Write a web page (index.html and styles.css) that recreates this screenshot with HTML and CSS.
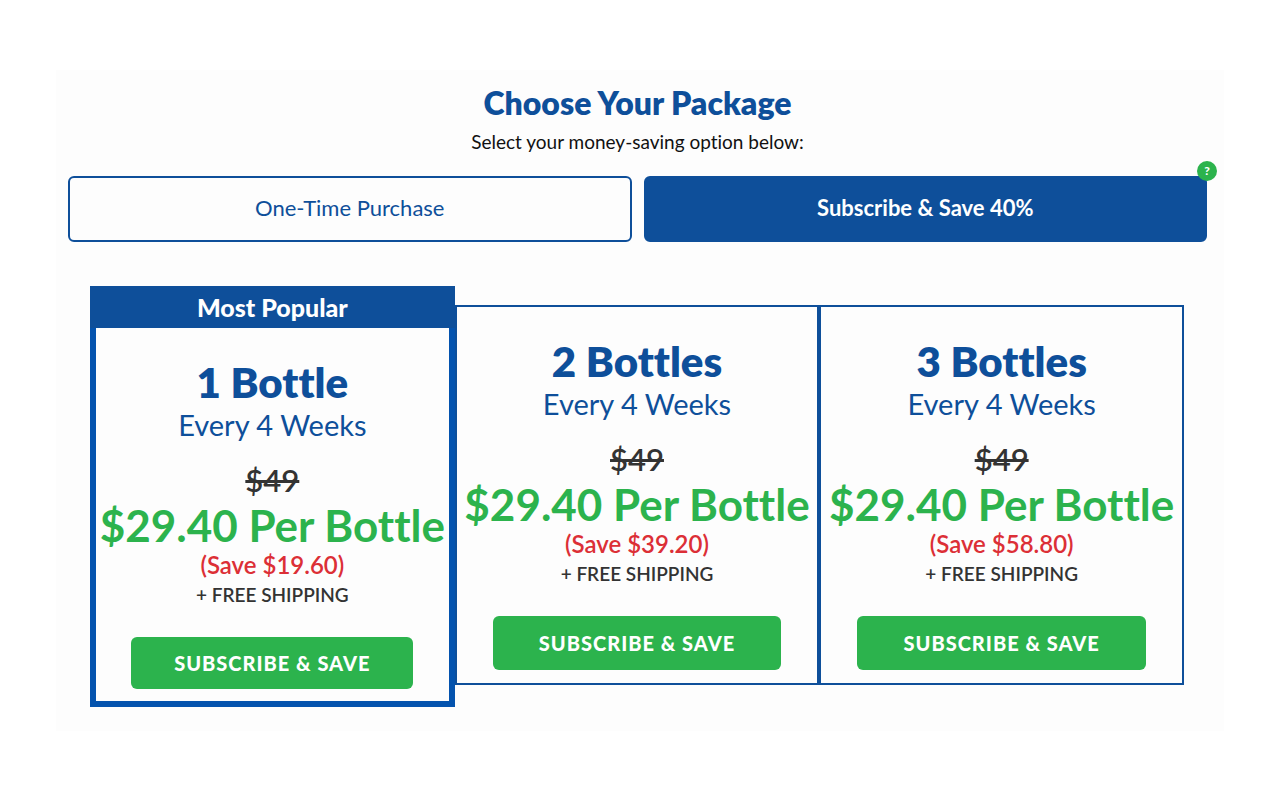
FILE: index.html
```
<!DOCTYPE html>
<html lang="en">
<head>
    <meta charset="UTF-8">
    <meta name="viewport" content="width=device-width, initial-scale=1.0">
    <title>Choose Your Package</title>
    <link rel="stylesheet" href="styles.css">
</head>
<body>
    <main class="package">
        <h1>Choose Your Package</h1>
        <p class="intro">Select your money-saving option below:</p>
        <div class="options">
            <button type="button" class="option">One-Time Purchase</button>
            <div class="option-wrap">
                <button type="button" class="option active">Subscribe &amp; Save 40%</button>
                <button type="button" class="help" aria-label="Help">?</button>
            </div>
        </div>
        <div class="cards">
            <section class="card popular">
                <div class="ribbon">Most Popular</div>
                <h2>1 Bottle</h2>
                <p class="every">Every 4 Weeks</p>
                <p class="old-price"><del>$49</del></p>
                <p class="price">$29.40 Per Bottle</p>
                <p class="save">(Save $19.60)</p>
                <p class="shipping">+ FREE SHIPPING</p>
                <button type="button" class="buy">SUBSCRIBE &amp; SAVE</button>
            </section>
            <section class="card">
                <h2>2 Bottles</h2>
                <p class="every">Every 4 Weeks</p>
                <p class="old-price"><del>$49</del></p>
                <p class="price">$29.40 Per Bottle</p>
                <p class="save">(Save $39.20)</p>
                <p class="shipping">+ FREE SHIPPING</p>
                <button type="button" class="buy">SUBSCRIBE &amp; SAVE</button>
            </section>
            <section class="card">
                <h2>3 Bottles</h2>
                <p class="every">Every 4 Weeks</p>
                <p class="old-price"><del>$49</del></p>
                <p class="price">$29.40 Per Bottle</p>
                <p class="save">(Save $58.80)</p>
                <p class="shipping">+ FREE SHIPPING</p>
                <button type="button" class="buy">SUBSCRIBE &amp; SAVE</button>
            </section>
        </div>
    </main>
</body>
</html>
```
FILE: styles.css
```
* { box-sizing: border-box; }
body { margin: 0; background: #fff; color: #333; font-family: Lato, "Liberation Sans", sans-serif; font-variant-ligatures: none; text-align: center; }
h1, h2, p { margin: 0; }
button { font-family: inherit; font-variant-ligatures: none; cursor: pointer; }

.package { margin: 70px 56px; padding: 11px 17px 24px 12px; background: #fdfdfd; }
h1 { color: #0e4f9a; font-size: 32px; line-height: 44px; font-weight: 800; }
.intro { color: #111; font-size: 19px; line-height: 34px; }

.options { display: grid; grid-template-columns: 1fr 1fr; gap: 12px; margin-top: 17px; }
.option { width: 100%; height: 66px; padding: 0 6px 4px; border: 2px solid #0e4f9a; border-radius: 6px; background: #fdfdfd; color: #0e4f9a; font-size: 22px; font-weight: 400; }
.option-wrap { position: relative; }
.option.active { background: #0e4f9a; color: #fff; font-weight: 700; }
.help { position: absolute; top: -15px; right: -10px; width: 20px; height: 20px; padding: 0; border: none; border-radius: 50%; background: #2cb34d; color: #fff; font-size: 12px; line-height: 20px; font-weight: 900; }

.cards { display: grid; grid-template-columns: repeat(3, minmax(0, 1fr)); align-items: start; margin: 44px 23px 0 22px; }
.card { display: flex; flex-direction: column; align-items: center; margin-top: 19px; padding: 28px 0 13px; border: 2px solid #0e4f9a; white-space: nowrap; }
.popular { margin-top: 0; padding: 0 0 12px; border: 6px solid #0453ae; border-top: none; }
.ribbon { align-self: stretch; margin: 0 -6px 28px; background: #0e4f9a; color: #fff; font-size: 25px; line-height: 42px; font-weight: 900; }
.card h2 { color: #0e4f9a; font-size: 42px; line-height: 52px; font-weight: 800; }
.every { color: #0e4f9a; font-size: 29px; line-height: 34px; font-weight: 400; }
.old-price { margin-top: 18px; font-size: 31px; line-height: 40px; font-weight: 600; }
.price { color: #2cb34d; font-size: 44px; line-height: 50px; font-weight: 700; }
.save { color: #dc2f36; font-size: 24px; line-height: 30px; font-weight: 600; }
.shipping { font-size: 19px; line-height: 30px; font-weight: 600; }
.buy { width: 80%; height: 54px; margin-top: 27px; border: none; border-radius: 6px; background: #2cb34d; color: #fff; font-size: 20px; font-weight: 900; letter-spacing: 1px; }
.popular .buy { height: 52px; }
```
